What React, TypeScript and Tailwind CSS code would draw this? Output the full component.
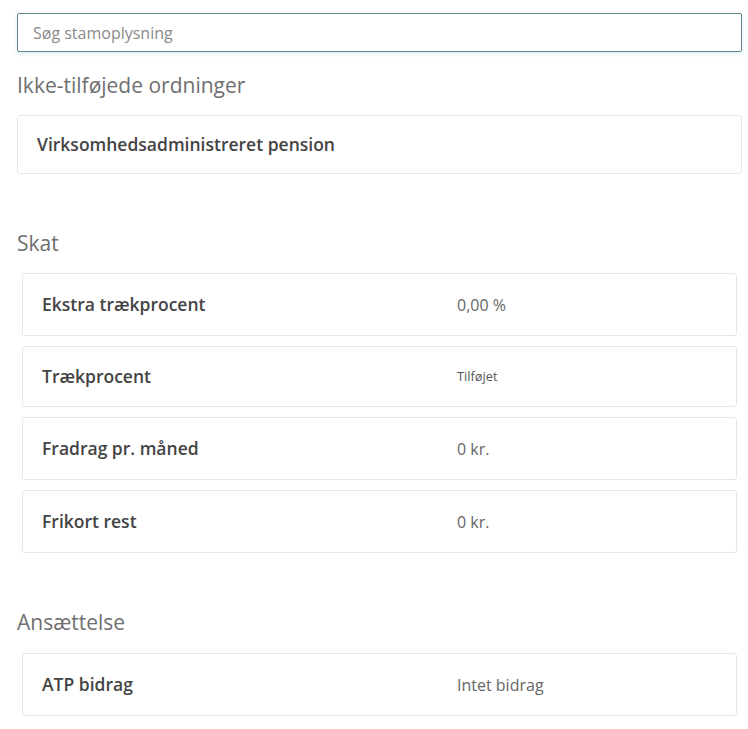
import React from "react";

type Row = { label: string; value: string; small?: boolean };

const SKAT: Row[] = [
  { label: "Ekstra trækprocent", value: "0,00 %" },
  { label: "Trækprocent", value: "Tilføjet", small: true },
  { label: "Fradrag pr. måned", value: "0 kr." },
  { label: "Frikort rest", value: "0 kr." },
];

const ANSAETTELSE: Row[] = [{ label: "ATP bidrag", value: "Intet bidrag" }];

function SectionTitle({ children }: { children: React.ReactNode }) {
  return (
    <h2 className="text-[21px] leading-[28px] font-normal text-[#6f6f6f]">
      {children}
    </h2>
  );
}

function InfoRow({ row }: { row: Row }) {
  return (
    <div
      className={`flex items-center rounded-[3px] border border-[#e6e6e6] bg-white pl-[19px] ${
        row.small ? "h-[61px]" : "h-[63px]"
      }`}
    >
      <span className="w-[415px] shrink-0 text-[17.5px] font-semibold text-[#444]">
        {row.label}
      </span>
      <span
        className={
          row.small
            ? "text-[12.8px] text-[#555]"
            : "text-[16px] text-[#666]"
        }
      >
        {row.value}
      </span>
    </div>
  );
}

export default function App() {
  return (
    <div
      className="min-h-[729px] bg-white"
      style={{ fontFamily: '"Open Sans", "Noto Sans", sans-serif' }}
    >
      <div className="ml-[17px] w-[725px] pt-[13px]">
        <input
          autoFocus
          placeholder="Søg stamoplysning"
          className="block h-[39px] w-full rounded-[2px] border border-[#5f878a] bg-white px-[15px] text-[16px] text-[#333] outline-none placeholder:text-[#8a8a8a] shadow-[0_2px_5px_rgba(90,140,200,0.18)]"
        />

        <div className="mt-[19px]">
          <SectionTitle>Ikke-tilføjede ordninger</SectionTitle>
        </div>

        <div className="mt-[16px] flex h-[59px] items-center rounded-[3px] border border-[#e6e6e6] pl-[19px]">
          <span className="text-[17.5px] font-semibold text-[#444]">
            Virksomhedsadministreret pension
          </span>
        </div>

        <div className="mt-[55px]">
          <SectionTitle>Skat</SectionTitle>
        </div>
        <div className="mx-[5px] mt-[16px] flex flex-col gap-[10px]">
          {SKAT.map((r) => (
            <InfoRow key={r.label} row={r} />
          ))}
        </div>

        <div className="mt-[55px]">
          <SectionTitle>Ansættelse</SectionTitle>
        </div>
        <div className="mx-[5px] mt-[17px] flex flex-col gap-[10px]">
          {ANSAETTELSE.map((r) => (
            <InfoRow key={r.label} row={r} />
          ))}
        </div>
      </div>
    </div>
  );
}
